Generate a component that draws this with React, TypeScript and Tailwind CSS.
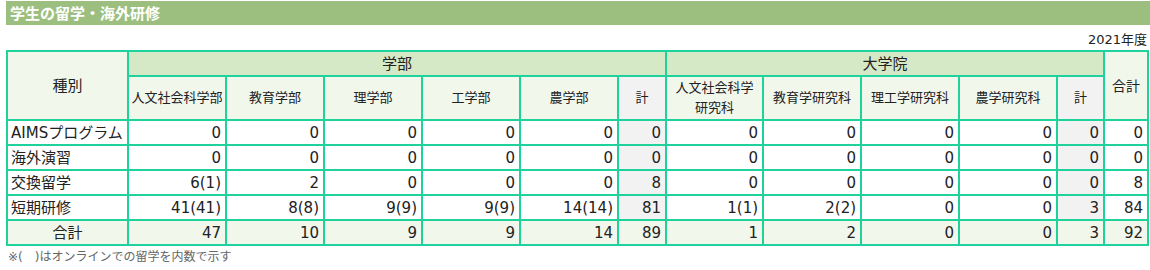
const rows: string[][] = [
  ["AIMSプログラム", "0", "0", "0", "0", "0", "0", "0", "0", "0", "0", "0", "0"],
  ["海外演習", "0", "0", "0", "0", "0", "0", "0", "0", "0", "0", "0", "0"],
  ["交換留学", "6(1)", "2", "0", "0", "0", "8", "0", "0", "0", "0", "0", "8"],
  ["短期研修", "41(41)", "8(8)", "9(9)", "9(9)", "14(14)", "81", "1(1)", "2(2)", "0", "0", "3", "84"],
];

const total = ["47", "10", "9", "9", "14", "89", "1", "2", "0", "0", "3", "92"];

// 計 columns are shaded grey
const isSubtotal = (i: number) => i === 5 || i === 10;

const cell = "border-2 border-[#1fd19b] p-0";

export default function App() {
  return (
    <div className="w-[1150px] h-[270px] bg-white pl-[6px] pt-px text-[#222] font-['DejaVu_Sans','Noto_Sans_CJK_JP',sans-serif] overflow-hidden">
      <h2 className="h-6 bg-[#9cbf7f] pl-1 text-[15px] leading-6 font-bold text-white font-['Noto_Sans_CJK_JP',sans-serif]">
        学生の留学・海外研修
      </h2>
      <div className="w-[1141px]">
        <p className="mt-[5px] h-5 text-right text-[13px] leading-5">2021年度</p>
        <table className="w-[1141px] table-fixed border-collapse">
          <colgroup>
            <col className="w-[121px]" />
            <col className="w-[98px]" />
            <col className="w-[98px]" />
            <col className="w-[98px]" />
            <col className="w-[98px]" />
            <col className="w-[98px]" />
            <col className="w-[48px]" />
            <col className="w-[97px]" />
            <col className="w-[98px]" />
            <col className="w-[98px]" />
            <col className="w-[98px]" />
            <col className="w-[47px]" />
            <col className="w-[44px]" />
          </colgroup>
          <thead>
            <tr className="h-[25px] text-[15px] leading-5">
              <th rowSpan={2} className={`${cell} bg-[#f2f7ec] font-normal`}>種別</th>
              <th colSpan={6} className={`${cell} bg-[#d6e9c6] font-normal`}>学部</th>
              <th colSpan={5} className={`${cell} bg-[#d6e9c6] font-normal`}>大学院</th>
              <th rowSpan={2} className={`${cell} bg-[#f2f7ec] font-normal text-[14px]`}>合計</th>
            </tr>
            <tr className="h-[44px] text-[13px] leading-[20px]">
              <th className={`${cell} bg-[#f2f7ec] font-normal`}>人文社会科学部</th>
              <th className={`${cell} bg-[#f2f7ec] font-normal`}>教育学部</th>
              <th className={`${cell} bg-[#f2f7ec] font-normal`}>理学部</th>
              <th className={`${cell} bg-[#f2f7ec] font-normal`}>工学部</th>
              <th className={`${cell} bg-[#f2f7ec] font-normal`}>農学部</th>
              <th className={`${cell} bg-[#f2f2f2] font-normal`}>計</th>
              <th className={`${cell} bg-[#f2f7ec] font-normal`}>
                人文社会科学
                <br />
                研究科
              </th>
              <th className={`${cell} bg-[#f2f7ec] font-normal`}>教育学研究科</th>
              <th className={`${cell} bg-[#f2f7ec] font-normal`}>理工学研究科</th>
              <th className={`${cell} bg-[#f2f7ec] font-normal`}>農学研究科</th>
              <th className={`${cell} bg-[#f2f2f2] font-normal`}>計</th>
            </tr>
          </thead>
          <tbody className="text-[15px] leading-5">
            {rows.map((r) => (
              <tr key={r[0]} className="h-[25px]">
                <td className={`${cell} pl-[3px] whitespace-nowrap`}>{r[0]}</td>
                {r.slice(1).map((v, i) => (
                  <td
                    key={i}
                    className={`${cell} pr-[4px] text-right ${isSubtotal(i) ? "bg-[#f2f2f2]" : ""}`}
                  >
                    {v}
                  </td>
                ))}
              </tr>
            ))}
            <tr className="h-[25px] bg-[#f2f7ec]">
              <td className={`${cell} text-center`}>合計</td>
              {total.map((v, i) => (
                <td key={i} className={`${cell} pr-[4px] text-right`}>
                  {v}
                </td>
              ))}
            </tr>
          </tbody>
        </table>
        <p className="mt-[3px] pl-[2px] text-[12px] leading-4 text-[#666]">※(　)はオンラインでの留学を内数で示す</p>
      </div>
    </div>
  );
}
